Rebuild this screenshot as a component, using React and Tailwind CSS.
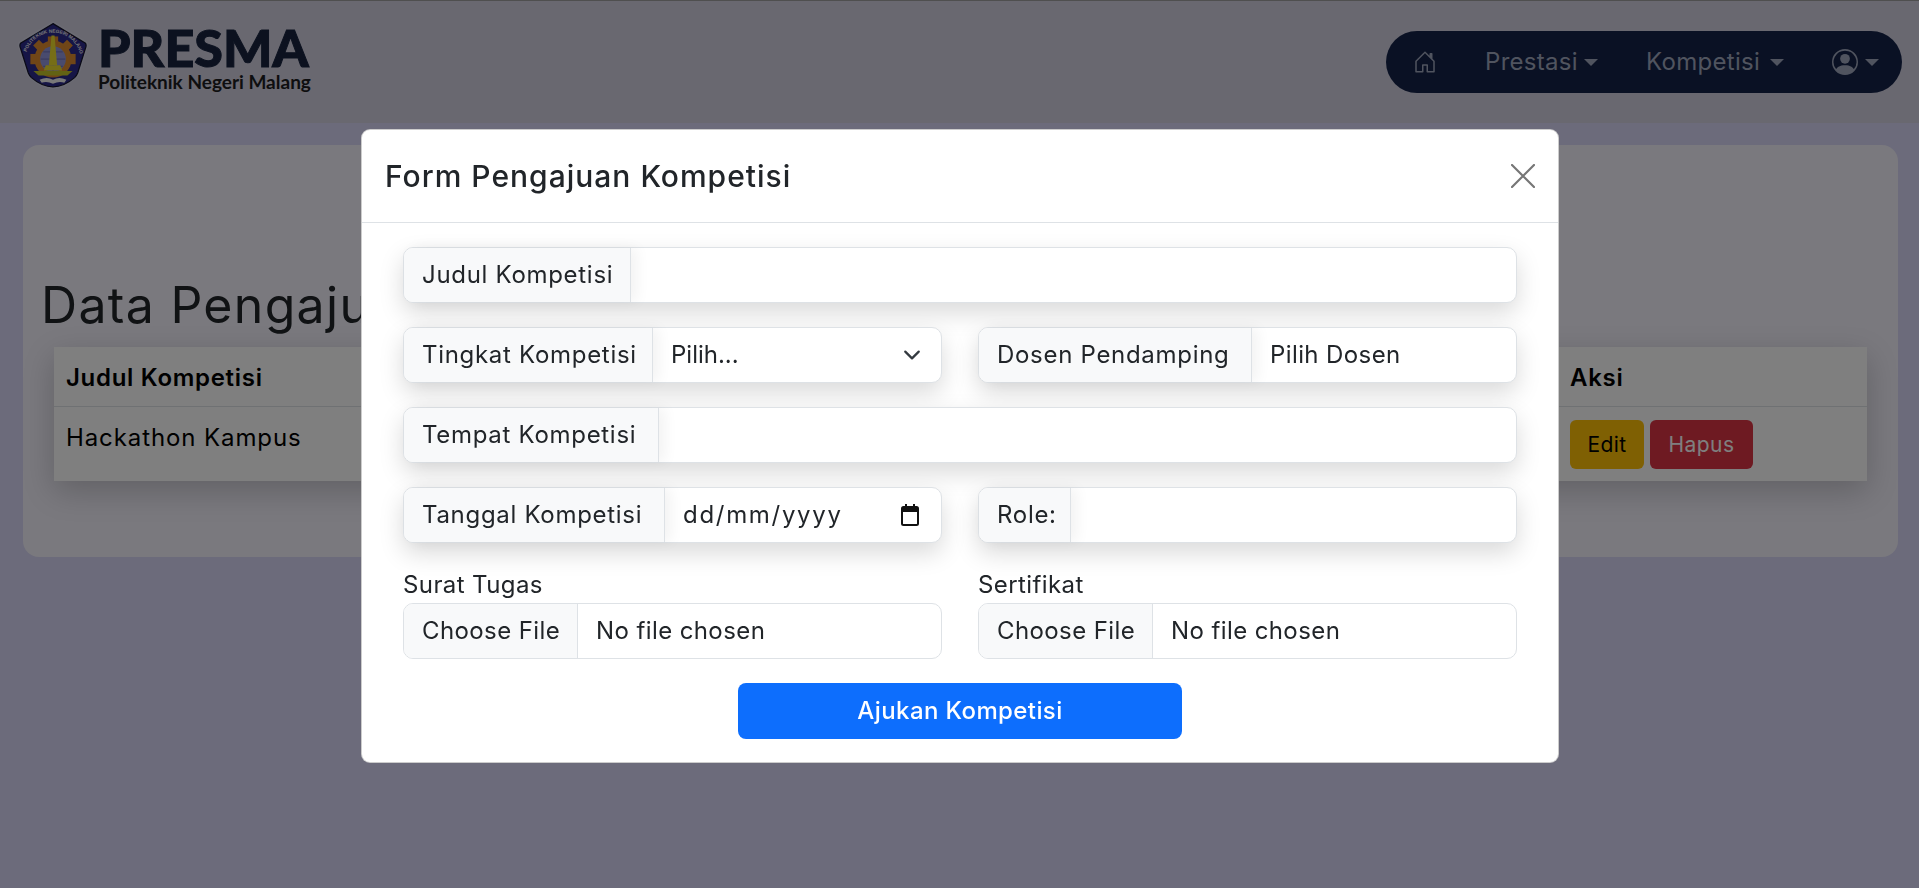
import { BsHouseDoor, BsPersonCircle } from 'react-icons/bs'

const fieldText = 'text-[24px] tracking-[0.7px] text-[#212529]'
const valueText = 'text-[24px] tracking-[0.4px] text-[#212529]'

function Logo() {
  return (
    <svg width="72" height="70" viewBox="0 0 70 68" className="ml-[-1px] shrink-0">
      <path d="M35 0 L68 20 Q70 22 69 25 L61 51 Q60 54 57 56 Q35 76 13 56 Q10 54 9 51 L1 25 Q0 22 2 20 Z" fill="#d8d8e8" />
      <path d="M35 2.500 L66.500 21.500 Q67.500 23 67 25 L59 50.500 Q58 53 56 55 Q35 73 14 55 Q12 53 11 50.500 L3 25 Q2.500 23 3.500 21.500 Z" fill="#2c2a8c" stroke="#14142c" strokeWidth="1.200" />
      <path id="logoArc" d="M9 31 A27 27 0 0 1 61 31" fill="none" />
      <text fontSize="4.700" fill="#ececec" fontFamily="Liberation Sans, sans-serif" fontWeight="700">
        <textPath href="#logoArc" startOffset="1">POLITEKNIK NEGERI MALANG</textPath>
      </text>
      <g fill="#e08c2e">
        <circle cx="35" cy="37" r="18" />
        <rect x="30" y="15" width="10" height="6" />
        <rect x="13" y="32" width="6" height="10" />
        <rect x="51" y="32" width="6" height="10" />
        <rect x="17" y="20" width="8" height="7" transform="rotate(-45 21 23.500)" />
        <rect x="45" y="20" width="8" height="7" transform="rotate(45 49 23.500)" />
      </g>
      <circle cx="35" cy="37" r="12.500" fill="#9396dc" />
      <path d="M23 37 H47 M35 25 V49 M25.500 30 H44.500 M25.500 44 H44.500" stroke="#54569e" strokeWidth="0.600" fill="none" />
      <path d="M33.500 14 L36.500 14 L39 43 L31 43 Z" fill="#ecdc2c" />
      <path d="M28 43 H42 L44 48 H26 Z" fill="#ecdc2c" />
      <path d="M16 48.500 H54 L49 53 H21 Z" fill="#c4c428" />
      <path d="M22 57 Q29 54 35 57 Q41 54 48 57 L46 60 Q41 58 35 61 Q29 58 24 60 Z" fill="#f2f2f2" />
    </svg>
  )
}

function Caret({ className }) {
  return <span className={`h-0 w-0 border-x-[7px] border-t-[7px] border-x-transparent border-t-current ${className}`} />
}

function Navbar() {
  return (
    <header className="flex h-[123px] items-start justify-between border-t border-[#9e9e9e] bg-[#d2d0e0] pl-[18px] pr-[17px]">
      <div className="mt-[20px] flex items-start gap-[9px]">
        <Logo />
        <div className="font-['Lato',sans-serif]">
          <div className="mt-[3px] text-[52px] font-black leading-[46px] text-[#18233f] [-webkit-text-stroke:1px_#18233f]">PRESMA</div>
          <div className="mt-[1px] text-[19px] font-bold leading-[22px] text-[#1c1c20]">Politeknik Negeri Malang</div>
        </div>
      </div>
      <nav className="mt-[30px] flex h-[62px] w-[516px] items-center rounded-[31px] bg-[#142248] pl-[27px] text-[24px] text-[#a0a8be]">
        <BsHouseDoor size={24} />
        <span className="ml-[48px] w-[93px] whitespace-nowrap tracking-[0.3px]">Prestasi</span>
        <Caret className="ml-[6px]" />
        <span className="ml-[48px] w-[117px] whitespace-nowrap tracking-[0.3px]">Kompetisi</span>
        <Caret className="ml-[7px]" />
        <BsPersonCircle size={26} className="ml-[48px]" />
        <Caret className="ml-[7px]" />
      </nav>
    </header>
  )
}

function DataCard() {
  return (
    <section className="mx-[23px] mt-[22px] h-[412px] w-[1875px] rounded-[16px] bg-[#f4f2fc] pl-[19px] pr-[11px]">
      <h1 className="ml-[-1px] whitespace-nowrap pt-[131px] text-[50px] leading-[58px] tracking-[1.300px] text-[#212529]">Data Pengajuan Kompetisi</h1>
      <div className="ml-[12px] mt-[13px] w-[1813px] bg-white shadow-[0_10px_30px_rgba(0,0,0,0.2)]">
        <div className="grid h-[60px] grid-cols-[1fr_309px] items-center border-b border-[#dee2e6] pt-[2px] text-[24px] font-semibold tracking-[0.7px] text-black">
          <span className="pl-[12px]">Judul Kompetisi</span>
          <span className="pl-[12px]">Aksi</span>
        </div>
        <div className="grid h-[74px] grid-cols-[1fr_309px] text-[24px] tracking-[0.9px] text-black">
          <span className="pl-[12px] pt-[13px]">Hackathon Kampus</span>
          <div className="flex items-start gap-[6px] pl-[12px] pt-[13px]">
            <button className="h-[49px] w-[74px] rounded-[6px] bg-[#ffc107] text-[21px] tracking-[0.4px] text-black">Edit</button>
            <button className="h-[49px] w-[103px] rounded-[6px] bg-[#dc3545] text-[21px] tracking-[0.4px] text-white">Hapus</button>
          </div>
        </div>
      </div>
    </section>
  )
}

function Field({ label, labelWidth, children }) {
  return (
    <div className="flex h-[56px] rounded-[10px] border border-[#dee2e6] bg-white shadow-[0_10px_24px_rgba(0,0,0,0.15)]">
      <label
        className={`flex shrink-0 items-center whitespace-nowrap rounded-l-[9px] border-r border-[#dee2e6] bg-[#f8f9fa] pl-[18px] shadow-[6px_0_14px_rgba(0,0,0,0.05)] ${fieldText}`}
        style={{ width: labelWidth }}
      >
        {label}
      </label>
      {children}
    </div>
  )
}

function FileField({ label }) {
  return (
    <div>
      <div className={`mb-[2px] h-[32px] leading-[32px] ${valueText}`}>{label}</div>
      <div className={`flex h-[56px] items-center rounded-[10px] border border-[#dee2e6] bg-white ${valueText}`}>
        <span className="flex h-full w-[174px] items-center whitespace-nowrap rounded-l-[9px] border-r border-[#dee2e6] bg-[#f8f9fa] pl-[18px]">Choose File</span>
        <span className="pl-[18px]">No file chosen</span>
      </div>
    </div>
  )
}

function Modal() {
  return (
    <div className="fixed inset-0 bg-black/50 pl-[361px] pt-[129px]">
      <div className="h-[634px] w-[1198px] rounded-[9px] border border-black/20 bg-white">
        <div className="flex h-[93px] items-center justify-between border-b border-[#dee2e6] pl-[23px] pr-[23px]">
          <h5 className="text-[30px] font-medium tracking-[1px] text-[#212529]">Form Pengajuan Kompetisi</h5>
          <svg width="24" height="24" viewBox="0 0 24 24" stroke="#767676" strokeWidth="2.200" strokeLinecap="round" fill="none">
            <path d="M1 1 L23 23 M23 1 L1 23" />
          </svg>
        </div>
        <form className="pl-[41px] pr-[41px] pt-[24px]">
          <div className="grid grid-cols-2 gap-x-[36px] gap-y-[24px]">
            <div className="col-span-2">
              <Field label="Judul Kompetisi" labelWidth="227px"><input className="min-w-0 flex-1 outline-none" /></Field>
            </div>
            <Field label="Tingkat Kompetisi" labelWidth="249px">
              <div className="flex flex-1 items-center justify-between pl-[18px] pr-[20px] text-[24px] text-[#212529]">
                <span>Pilih...</span>
                <svg width="18" height="18" viewBox="0 0 16 16" fill="none" stroke="#343a40" strokeWidth="2" strokeLinecap="round" strokeLinejoin="round">
                  <path d="m2 5 6 6 6-6" />
                </svg>
              </div>
            </Field>
            <Field label="Dosen Pendamping" labelWidth="273px">
              <span className={`flex items-center pl-[18px] ${valueText}`}>Pilih Dosen</span>
            </Field>
            <div className="col-span-2">
              <Field label="Tempat Kompetisi" labelWidth="255px"><input className="min-w-0 flex-1 outline-none" /></Field>
            </div>
            <Field label="Tanggal Kompetisi" labelWidth="261px">
              <div className="flex flex-1 items-center justify-between pl-[18px] pr-[21px] text-[24px] tracking-[1.700px] text-[#212529]">
                <span>dd/mm/yyyy</span>
                <svg width="20" height="22" viewBox="0 0 20 22" fill="none" stroke="#111" strokeWidth="2">
                  <rect x="2" y="3" width="16" height="18" rx="1.500" />
                  <path d="M2 6 H18" strokeWidth="4" />
                  <path d="M6 0 V3 M14 0 V3" />
                </svg>
              </div>
            </Field>
            <Field label="Role:" labelWidth="92px"><input className="min-w-0 flex-1 outline-none" /></Field>
          </div>
          <div className="mt-[26px] grid grid-cols-2 gap-x-[36px]">
            <FileField label="Surat Tugas" />
            <FileField label="Sertifikat" />
          </div>
          <div className="mt-[24px] flex justify-center">
            <button type="button" className="h-[56px] w-[444px] rounded-[8px] bg-[#0d6efd] text-[24px] font-medium tracking-[0.4px] text-white">Ajukan Kompetisi</button>
          </div>
        </form>
      </div>
    </div>
  )
}

export default function App() {
  return (
    <div className="min-h-[888px] overflow-hidden bg-[#d8d6f6] font-['Inter',sans-serif]">
      <Navbar />
      <DataCard />
      <Modal />
    </div>
  )
}
